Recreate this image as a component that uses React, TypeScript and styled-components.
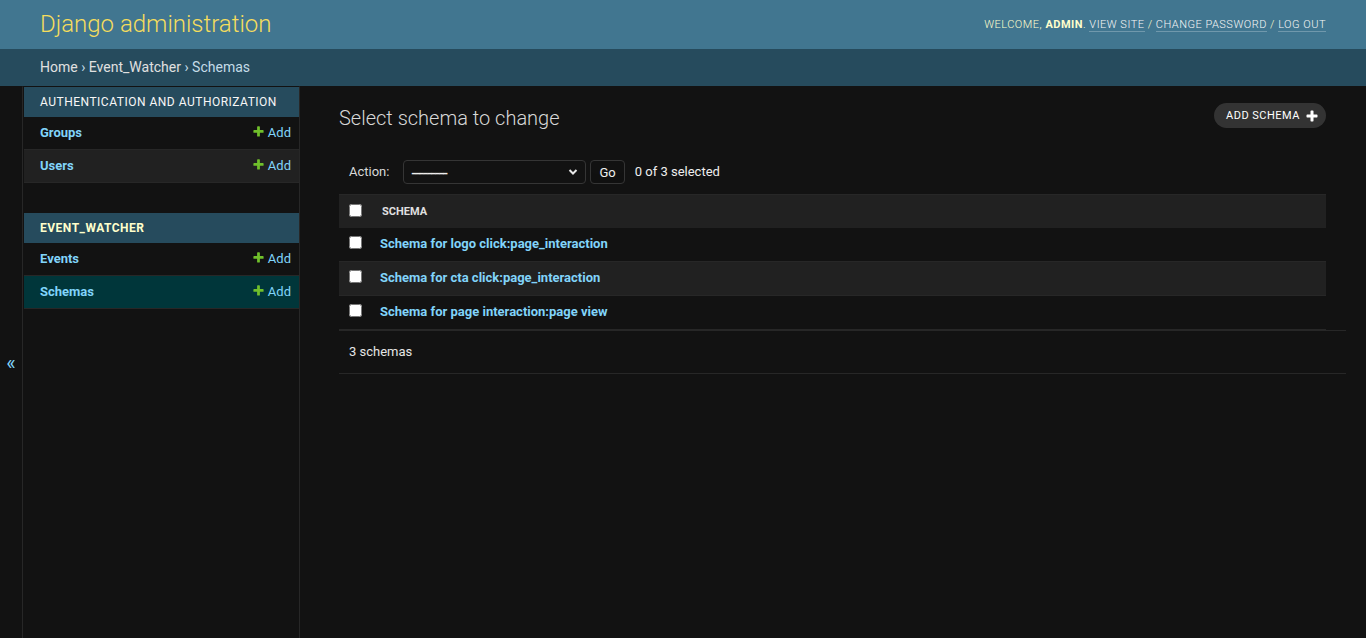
import React from 'react';
import styled, { createGlobalStyle } from 'styled-components';

const GlobalStyle = createGlobalStyle`
  *, *::before, *::after { box-sizing: border-box; }
  html, body { margin: 0; padding: 0; height: 100%; }
  body {
    background: #121212;
    color: #eeeeee;
    font-family: Roboto, "Noto Sans", "Liberation Sans", sans-serif;
    font-size: 14px;
  }
  #root { min-height: 100%; }
  a { text-decoration: none; }
`;

const Page = styled.div`
  display: flex;
  flex-direction: column;
  min-height: 100vh;
`;

const Header = styled.header`
  display: flex;
  justify-content: space-between;
  align-items: center;
  height: 49px;
  padding: 0 40px;
  background: #417690;
  color: #ffffcc;
`;

const Branding = styled.h1`
  margin: 0;
  font-size: 24px;
  line-height: 29px;
  font-weight: 300;
  color: #f5dd5d;
`;

const UserTools = styled.div`
  font-size: 11px;
  font-weight: 300;
  letter-spacing: 0.5px;
  text-transform: uppercase;
  color: #ffffcc;
  text-align: right;
`;

const UserName = styled.strong`
  font-weight: 700;
`;

const UserLink = styled.a`
  color: #f7f7f7;
  border-bottom: 1px solid rgba(255, 255, 255, 0.25);
`;

const Breadcrumbs = styled.nav`
  background: #264b5d;
  padding: 10px 40px;
  font-size: 14px;
  line-height: 17px;
  color: #c4dce8;
`;

const Crumb = styled.a`
  color: #e0e0e0;
`;

const Main = styled.div`
  display: flex;
  flex: 1 0 auto;
`;

const ToggleNav = styled.button`
  flex: 0 0 23px;
  width: 23px;
  padding: 0;
  border: 0;
  border-top: 1px solid transparent;
  border-right: 1px solid #272727;
  background: #121212;
  color: #81d4fa;
  font-family: inherit;
  font-size: 20px;
  display: flex;
  align-items: center;
  justify-content: center;
  cursor: pointer;
`;

const NavSidebar = styled.nav`
  flex: 0 0 277px;
  border-top: 1px solid transparent;
  border-right: 1px solid #272727;
  padding-left: 1px;
  background: #121212;
`;

const Module = styled.table`
  width: 100%;
  border-collapse: collapse;
  border-spacing: 0;
  margin-bottom: 30px;
`;

const Caption = styled.caption<{ $current?: boolean }>`
  text-align: left;
  padding: 8px 8px 8px 16px;
  font-size: 12px;
  line-height: 14px;
  letter-spacing: 0.5px;
  text-transform: uppercase;
  background: #264b5d;
  color: ${(p) => (p.$current ? '#ffffcc' : '#f7f7f7')};
  font-weight: ${(p) => (p.$current ? 700 : 400)};
`;

const NavRow = styled.tr<{ $alt?: boolean; $current?: boolean }>`
  background: ${(p) => (p.$current ? '#00363a' : p.$alt ? '#212121' : '#121212')};
`;

const NavTh = styled.th`
  text-align: left;
  padding: 8px 8px 8px 16px;
  font-size: 13px;
  line-height: 16px;
  border-bottom: 1px solid #272727;
`;

const NavTd = styled.td`
  text-align: right;
  padding: 8px;
  font-size: 13px;
  line-height: 16px;
  border-bottom: 1px solid #272727;
`;

const ModelLink = styled.a`
  color: #81d4fa;
  font-weight: 700;
`;

const AddLink = styled.a`
  color: #81d4fa;
  font-weight: 400;
  line-height: 16px;

  svg {
    vertical-align: -1px;
    margin-right: 3px;
  }
`;

const Content = styled.div`
  flex: 1 1 auto;
  padding: 21px 40px 20px 39px;
  min-width: 0;
`;

const TitleRow = styled.div`
  display: flex;
  justify-content: space-between;
  align-items: flex-start;
  margin-bottom: 20px;
`;

const Title = styled.h1`
  margin: 0;
  font-size: 20px;
  line-height: 23px;
  font-weight: 300;
  color: #d8d8d8;
`;

const AddButton = styled.a`
  display: inline-flex;
  align-items: center;
  gap: 5px;
  margin-top: -4px;
  padding: 3px 7px 3px 12px;
  height: 25px;
  background: #333333;
  border-radius: 15px;
  color: #ffffff;
  font-size: 11px;
  line-height: 19px;
  letter-spacing: 0.5px;
  text-transform: uppercase;
`;

const Actions = styled.div`
  display: flex;
  align-items: center;
  height: 44px;
  padding: 10px;
  font-size: 13px;
  line-height: 24px;
  color: #d8d8d8;
`;

const SelectWrap = styled.div`
  position: relative;
  margin-left: 14px;
  display: flex;
`;

const ActionSelect = styled.select`
  appearance: none;
  width: 183px;
  height: 24px;
  padding: 0 0 0 7px;
  background: #121212;
  color: #eeeeee;
  border: 1px solid #353535;
  border-radius: 4px;
  font-family: inherit;
  font-size: 18px;
  letter-spacing: -1.05px;
`;

const Chevron = styled.svg`
  position: absolute;
  right: 8px;
  top: 8px;
  pointer-events: none;
`;

const GoButton = styled.button`
  margin-left: 4px;
  height: 24px;
  padding: 4px 8px;
  background: #121212;
  color: #eeeeee;
  border: 1px solid #353535;
  border-radius: 4px;
  box-shadow: 0 -15px 20px -10px rgba(0, 0, 0, 0.15) inset;
  font-family: inherit;
  font-size: 13px;
  line-height: 1;
  cursor: pointer;
`;

const Counter = styled.span`
  margin-left: 10px;
  color: #eeeeee;
`;

const ResultsHead = styled.div`
  display: grid;
  grid-template-columns: 31px 1fr;
  align-items: center;
  height: 34px;
  background: #212121;
  border-top: 1px solid #272727;
`;

const HeadLabel = styled.span`
  padding-left: 12px;
  font-size: 11px;
  font-weight: 700;
  text-transform: uppercase;
  color: #e0e0e0;
`;

const CheckCell = styled.div<{ $head?: boolean }>`
  display: flex;
  padding: ${(p) => (p.$head ? '0 0 2px 10px' : '8px 0 0 10px')};
  align-self: ${(p) => (p.$head ? 'center' : 'start')};
`;

const Check = styled.input`
  margin: 0;
  width: 13px;
  height: 13px;
`;

const ResultRow = styled.div<{ $alt?: boolean }>`
  display: grid;
  grid-template-columns: 31px 1fr;
  min-height: 34px;
  background: ${(p) => (p.$alt ? '#212121' : '#121212')};
  border-bottom: 1px solid #272727;
`;

const ResultCell = styled.div`
  padding: 8px 10px;
  font-size: 13px;
  line-height: 16px;
`;

const Paginator = styled.p`
  margin: 0 -20px 0 0;
  padding: 10px;
  border-top: 1px solid #272727;
  border-bottom: 1px solid #272727;
  font-size: 13px;
  line-height: 22px;
  color: #e6e6e6;
`;

const PlusIcon = ({ size, color }: { size: number; color: string }) => (
  <svg width={size} height={size} viewBox="0 0 1792 1792" aria-hidden="true">
    <path
      fill={color}
      d="M1600 796v192q0 40-28 68t-68 28h-416v416q0 40-28 68t-68 28h-192q-40 0-68-28t-28-68v-416h-416q-40 0-68-28t-28-68v-192q0-40 28-68t68-28h416v-416q0-40 28-68t68-28h192q40 0 68 28t28 68v416h416q40 0 68 28t28 68z"
    />
  </svg>
);

const navModules = [
  {
    name: 'Authentication and Authorization',
    current: false,
    models: [
      { name: 'Groups', current: false },
      { name: 'Users', current: false },
    ],
  },
  {
    name: 'Event_Watcher',
    current: true,
    models: [
      { name: 'Events', current: false },
      { name: 'Schemas', current: true },
    ],
  },
];

const results = [
  'Schema for logo click:page_interaction',
  'Schema for cta click:page_interaction',
  'Schema for page interaction:page view',
];

export default function App() {
  return (
    <>
      <GlobalStyle />
      <Page>
        <Header>
          <Branding>Django administration</Branding>
          <UserTools>
            Welcome, <UserName>admin</UserName>. <UserLink href="#">View site</UserLink> /{' '}
            <UserLink href="#">Change password</UserLink> / <UserLink href="#">Log out</UserLink>
          </UserTools>
        </Header>
        <Breadcrumbs>
          <Crumb href="#">Home</Crumb> › <Crumb href="#">Event_Watcher</Crumb> › Schemas
        </Breadcrumbs>
        <Main>
          <ToggleNav aria-label="Toggle navigation">«</ToggleNav>
          <NavSidebar>
            {navModules.map((m) => (
              <Module key={m.name}>
                <Caption $current={m.current}>{m.name}</Caption>
                <tbody>
                  {m.models.map((model, i) => (
                    <NavRow key={model.name} $alt={i % 2 === 1} $current={model.current}>
                      <NavTh scope="row">
                        <ModelLink href="#">{model.name}</ModelLink>
                      </NavTh>
                      <NavTd>
                        <AddLink href="#">
                          <PlusIcon size={13} color="#70bf2b" />
                          Add
                        </AddLink>
                      </NavTd>
                    </NavRow>
                  ))}
                </tbody>
              </Module>
            ))}
          </NavSidebar>
          <Content>
            <TitleRow>
              <Title>Select schema to change</Title>
              <AddButton href="#">
                Add schema
                <PlusIcon size={14} color="#ffffff" />
              </AddButton>
            </TitleRow>
            <Actions>
              <label>Action:</label>
              <SelectWrap>
                <ActionSelect defaultValue="">
                  <option value="">---------</option>
                  <option value="delete">Delete selected schemas</option>
                </ActionSelect>
                <Chevron width="10" height="8" viewBox="0 0 10 8">
                  <polyline points="1.5,2 5,5.5 8.5,2" fill="none" stroke="#e8e8e8" strokeWidth="2" />
                </Chevron>
              </SelectWrap>
              <GoButton>Go</GoButton>
              <Counter>0 of 3 selected</Counter>
            </Actions>
            <ResultsHead>
              <CheckCell $head>
                <Check type="checkbox" />
              </CheckCell>
              <HeadLabel>Schema</HeadLabel>
            </ResultsHead>
            {results.map((r, i) => (
              <ResultRow key={r} $alt={i % 2 === 1}>
                <CheckCell>
                  <Check type="checkbox" />
                </CheckCell>
                <ResultCell>
                  <ModelLink href="#">{r}</ModelLink>
                </ResultCell>
              </ResultRow>
            ))}
            <Paginator>3 schemas</Paginator>
          </Content>
        </Main>
      </Page>
    </>
  );
}
